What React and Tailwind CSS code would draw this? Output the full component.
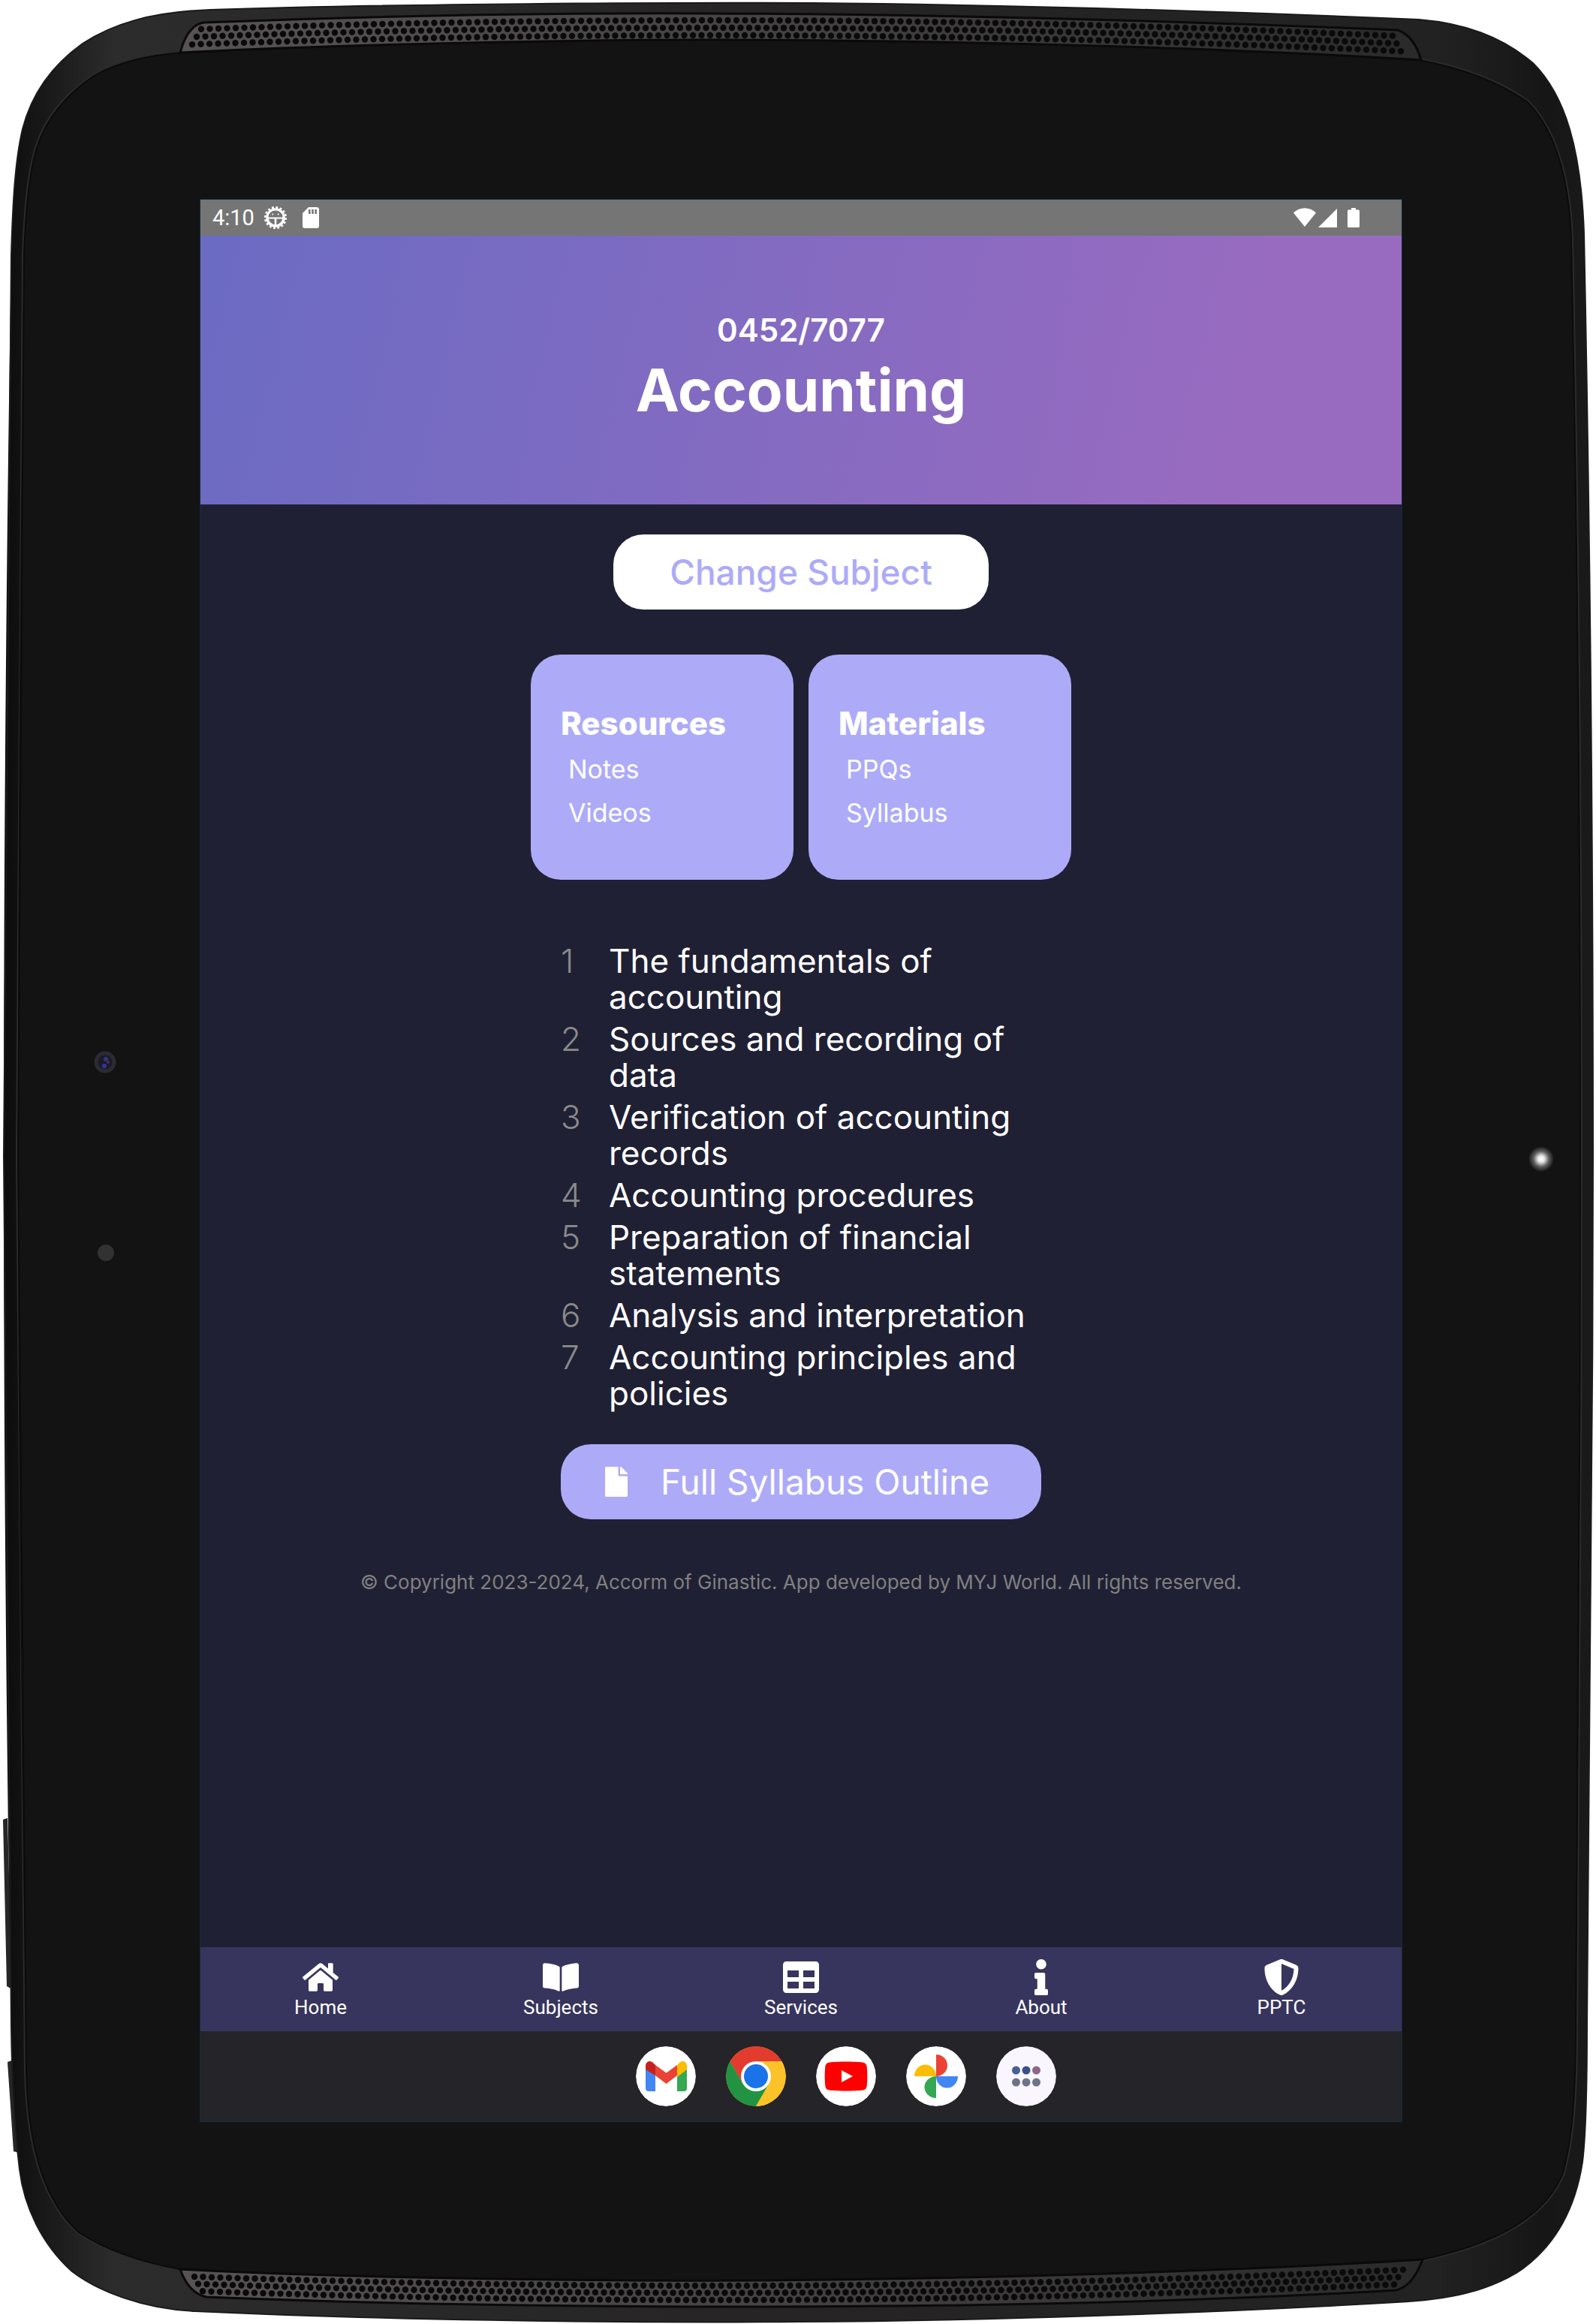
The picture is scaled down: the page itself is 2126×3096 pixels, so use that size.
import React from "react";
import { FaHome, FaBookOpen, FaTable, FaInfo, FaShieldAlt, FaFile } from "react-icons/fa";

const topics = [
  ["The fundamentals of", "accounting"],
  ["Sources and recording of", "data"],
  ["Verification of accounting", "records"],
  ["Accounting procedures"],
  ["Preparation of financial", "statements"],
  ["Analysis and interpretation"],
  ["Accounting principles and", "policies"],
];

const tabs = [
  { label: "Home", Icon: FaHome },
  { label: "Subjects", Icon: FaBookOpen },
  { label: "Services", Icon: FaTable },
  { label: "About", Icon: FaInfo },
  { label: "PPTC", Icon: FaShieldAlt },
];

const OUTER =
  "M15 340 C17 270 20 215 30 172 C42 125 68 88 110 58 C150 32 200 16 280 13 C520 5 900 3 1080 4 C1400 7 1700 18 1890 26 C1950 31 2000 48 2042 84 C2086 128 2106 200 2110 310 C2118 700 2122 1100 2122 1540 C2122 1950 2116 2400 2114 2700 C2114 2780 2113 2840 2108 2880 C2098 2945 2070 2995 2020 3028 C1980 3052 1930 3064 1860 3067 C1600 3082 1300 3092 1063 3093 C800 3095 500 3090 260 3079 C190 3076 130 3052 96 3026 C56 2990 32 2940 26 2890 C20 2840 16 2780 15 2700 C8 2300 5 1900 5 1540 C5 1100 9 700 15 340 Z";
const FACE =
  "M32 340 C34 280 38 235 48 200 C60 160 85 128 125 101 C160 81 200 73 245 70 C500 57 800 53 950 53 C1300 54 1640 64 1890 80 C1945 90 1995 108 2035 136 C2070 172 2090 230 2093 320 C2101 700 2105 1100 2105 1540 C2105 1950 2102 2400 2099 2720 C2098 2800 2094 2850 2082 2895 C2064 2940 2015 2985 1895 3010 C1640 3026 1300 3036 1000 3038 C750 3039 450 3034 240 3023 C195 3015 145 3000 105 2974 C62 2935 38 2870 35 2760 C28 2300 24 1900 24 1540 C24 1100 27 700 32 340 Z";

const grilleRows = [0, 1, 2];

function Grille({ bottom }) {
  const holes = [];
  grilleRows.forEach((row) => {
    const start = (bottom ? [259, 264, 270] : [268, 262, 256])[row];
    const end = (bottom ? [1876, 1870, 1862] : [1862, 1868, 1874])[row];
    for (let x = start; x < end; x += 11.5) {
      const bend = 0.0000253 * (x - 950) * (x - 950);
      const y = bottom ? 3045 + row * 9.5 - bend : 27 + row * 10 + bend;
      holes.push(<circle key={`${row}-${x}`} cx={x} cy={y} r="4.2" />);
    }
  });
  return (
    <g>
      <path
        d={
          bottom
            ? "M240 3023 C450 3034 750 3039 1000 3038 C1300 3036 1640 3026 1895 3010 C1886 3034 1876 3046 1860 3051 C1600 3066 1300 3073 1000 3073 C750 3073 500 3069 275 3060 C256 3056 246 3040 240 3023 Z"
            : "M240 70 C246 48 256 32 272 30 C500 21 750 17 950 18 C1300 19 1640 31 1862 40 C1878 46 1888 62 1893 80 C1640 64 1300 54 950 53 C800 53 500 57 240 70 Z"
        }
        fill="url(#mesh)"
        stroke="#0a0a0a"
        strokeWidth="3"
      />
      <g fill="#0a0a0a">{holes}</g>
    </g>
  );
}

function DeviceFrame() {
  return (
    <svg
      className="absolute inset-0 h-full w-full"
      viewBox="0 0 2126 3096"
      preserveAspectRatio="none"
      aria-hidden="true"
    >
      <defs>
        <linearGradient id="shell" x1="0" x2="1" y1="0" y2="0">
          <stop offset="0" stopColor="#0c0c0c" />
          <stop offset="0.02" stopColor="#161616" />
          <stop offset="0.07" stopColor="#2c2c2c" />
          <stop offset="0.5" stopColor="#262424" />
          <stop offset="0.9" stopColor="#222222" />
          <stop offset="0.97" stopColor="#161616" />
          <stop offset="1" stopColor="#1a1a1a" />
        </linearGradient>
        <linearGradient id="mesh" x1="0" x2="1" y1="0" y2="0">
          <stop offset="0" stopColor="#575354" />
          <stop offset="0.5" stopColor="#444142" />
          <stop offset="1" stopColor="#2a2a2a" />
        </linearGradient>
        <radialGradient id="led">
          <stop offset="0" stopColor="#ffffff" />
          <stop offset="0.25" stopColor="#e8e8e8" />
          <stop offset="0.6" stopColor="#606060" />
          <stop offset="1" stopColor="#131313" />
        </radialGradient>
      </defs>
      <path d="M4 2424 L10 2422 L16 2650 L9 2646 Z" fill="#262626" />
      <path d="M10 2747 L18 2744 L26 2868 L18 2866 Z" fill="#262626" />
      <path d={OUTER} fill="url(#shell)" stroke="#1b1b1b" strokeWidth="2" />
      <path d={FACE} fill="#131313" stroke="#2b2b2b" strokeWidth="6" />
      <path d={FACE} fill="#131313" stroke="#0b0b0b" strokeWidth="2" />
      <Grille />
      <Grille bottom />
      <circle cx="140" cy="1415" r="12" fill="#1a1b2a" stroke="#2b2c33" strokeWidth="5" />
      <circle cx="141" cy="1411" r="3" fill="#33377a" />
      <circle cx="139" cy="1420" r="3" fill="#33379a" />
      <circle cx="144" cy="1415" r="2" fill="#5a2c4a" />
      <circle cx="141" cy="1669" r="11" fill="#323232" />
      <circle cx="2053" cy="1544" r="17" fill="url(#led)" />
    </svg>
  );
}

function StatusBar() {
  return (
    <div className="flex h-12 items-center bg-[#757575] pl-4 pr-14 text-white">
      <span className="font-[Roboto,sans-serif] text-[29px] leading-8">4:10</span>
      <svg className="ml-3 size-8" viewBox="0 0 32 32" aria-hidden="true">
        <circle cx="16" cy="16" r="11" fill="none" stroke="#fff" strokeWidth="3.5" />
        <circle cx="16" cy="16" r="13.6" fill="none" stroke="#fff" strokeWidth="3" strokeDasharray="2.8 2.54" />
        <path d="M6 15.500h20v2H17.300V27h-2.600v-9.500H6z" fill="#fff" />
        <path d="M6.500 15a9.500 8.500 0 0 1 19 0z" fill="#757575" />
        <circle cx="12.300" cy="11.500" r="1" fill="#fff" />
        <circle cx="19.700" cy="11.500" r="1" fill="#fff" />
      </svg>
      <svg className="ml-5 h-7 w-[22px]" viewBox="0 0 22 28" aria-hidden="true">
        <path d="M8 0h11a3 3 0 0 1 3 3v22a3 3 0 0 1-3 3H3a3 3 0 0 1-3-3V8z" fill="#fff" />
        <path d="M8 3h2.500v6H8zM12.200 3h2.500v6h-2.500zM16.400 3h2.500v6h-2.500z" fill="#757575" />
      </svg>
      <svg className="ml-auto h-[26px] w-[88px]" viewBox="0 0 88 26" fill="#fff" aria-hidden="true">
        <path d="M0 6.500C8.500-1.800 21.500-1.800 30 6.500L15 25z" />
        <path d="M58 1v25H33z" />
        <path d="M77 0h6v2.500h3.500a1.500 1.500 0 0 1 1.500 1.500v20.500a1.500 1.500 0 0 1-1.500 1.500h-13a1.500 1.500 0 0 1-1.500-1.500V4a1.500 1.500 0 0 1 1.500-1.500H77z" />
      </svg>
    </div>
  );
}

function LinkCard({ title, links }) {
  return (
    <section className="w-[350px] rounded-[40px] bg-[#adabf8] px-10 py-[60px] text-white">
      <h2 className="text-[42px] font-extrabold leading-[64px]">{title}</h2>
      {links.map((link) => (
        <a key={link} href="#" className="block pl-2.5 text-[34px] leading-[58px]">
          {link}
        </a>
      ))}
    </section>
  );
}

const dockButton = "size-20 overflow-hidden rounded-full";

function Dock() {
  return (
    <div className="flex h-[120px] items-center justify-center gap-10 bg-[#252428] pl-[120px]">
      <button aria-label="Gmail" className={dockButton}>
        <svg viewBox="0 0 80 80">
          <circle cx="40" cy="40" r="40" fill="#fff" />
          <path d="M13 29l13 10v21H17a4 4 0 0 1-4-4z" fill="#4285f4" />
          <path d="M55 39l13-10v27a4 4 0 0 1-4 4h-9z" fill="#34a853" />
          <path d="M55 25l3.500-3.500c4-3.500 9.500-1 9.500 4.500v5L55 41z" fill="#fbbc04" />
          <path d="M26 25l14.500 10.500L55 25v14L40.500 50 26 39z" fill="#ea4335" />
          <path d="M13 31v-5c0-5.500 5.500-8 9.500-4.500L26 25v14z" fill="#c5221f" />
        </svg>
      </button>
      <button aria-label="Chrome" className={dockButton}>
        <svg viewBox="0 0 80 80">
          <circle cx="40" cy="40" r="40" fill="#fcc22a" />
          <path d="M5.400 20A40 40 0 0 1 74.600 20H40L22.700 50z" fill="#e33b2e" />
          <path d="M5.400 20A40 40 0 0 0 40 80L57.300 50H22.700z" fill="#229342" />
          <path d="M40 20h34.600A40 40 0 0 1 40 80l17.300-30z" fill="#fcc22a" />
          <circle cx="40" cy="40" r="20" fill="#fff" />
          <circle cx="40" cy="40" r="16" fill="#1a73e8" />
        </svg>
      </button>
      <button aria-label="YouTube" className={dockButton}>
        <svg viewBox="0 0 80 80">
          <circle cx="40" cy="40" r="40" fill="#fff" />
          <path d="M18 21.500c10-1.300 34-1.300 44 0 4 .5 5.500 3 5.800 6.500.7 7 .7 17 0 24-.3 3.500-1.800 6-5.800 6.500-10 1.300-34 1.300-44 0-4-.5-5.500-3-5.800-6.500-.7-7-.7-17 0-24 .3-3.500 1.800-6 5.800-6.500z" fill="#f00" />
          <path d="M34 32l15 8-15 8z" fill="#fff" />
        </svg>
      </button>
      <button aria-label="Photos" className={dockButton}>
        <svg viewBox="0 0 80 80">
          <circle cx="40" cy="40" r="40" fill="#fff" />
          <path d="M40 40V11a15 14.500 0 0 1 0 29z" fill="#ea4335" />
          <path d="M40 40H69a14.500 15.500 0 0 1-29 0z" fill="#4285f4" />
          <path d="M40 40V69a15.500 14.500 0 0 1 0-29z" fill="#34a853" />
          <path d="M40 40H11a14.500 15.500 0 0 1 29 0z" fill="#fbbc04" />
        </svg>
      </button>
      <button aria-label="All apps" className={dockButton}>
        <svg viewBox="0 0 80 80">
          <circle cx="40" cy="40" r="40" fill="#f9f7fd" />
          <circle cx="26.500" cy="32" r="5.500" fill="#4a5f95" />
          <circle cx="40" cy="32" r="5.500" fill="#3c5088" />
          <circle cx="53.500" cy="32" r="5.500" fill="#8c6788" />
          <circle cx="26.500" cy="48" r="5.500" fill="#6d7488" />
          <circle cx="40" cy="48" r="5.500" fill="#6d7488" />
          <circle cx="53.500" cy="48" r="5.500" fill="#6d7488" />
        </svg>
      </button>
    </div>
  );
}

export default function App() {
  return (
    <div className="relative flex min-h-screen flex-col bg-white pb-[269px] pl-[266px] pr-[258px] pt-[265px] font-[Inter,sans-serif]">
      <DeviceFrame />
      <div className="relative flex flex-1 flex-col border border-[#0e2f40] bg-[#202034]">
        <StatusBar />
        <header className="bg-[linear-gradient(103deg,#6b6bc3_0%,#996bc0_88%)] pb-[102px] pt-24 text-center text-white">
          <p className="text-[42px] font-semibold leading-[60px]">0452/7077</p>
          <h1 className="text-[78px] font-bold leading-[100px]">Accounting</h1>
        </header>
        <main className="flex flex-1 flex-col items-center pt-10">
          <button className="h-[100px] w-[500px] rounded-[40px] bg-white text-[46px] font-medium text-[#adabf8]">
            Change Subject
          </button>
          <div className="mt-[60px] flex gap-5">
            <LinkCard title="Resources" links={["Notes", "Videos"]} />
            <LinkCard title="Materials" links={["PPQs", "Syllabus"]} />
          </div>
          <ol className="mb-11 mt-[84px] flex w-[640px] flex-col gap-2 text-[44px] leading-12 text-white">
            {topics.map((lines, i) => (
              <li key={lines[0]} className="flex">
                <span className="w-16 shrink-0 font-light text-[#8a8a8a]">{i + 1}</span>
                <span className="whitespace-nowrap">
                  {lines.map((line, n) => (
                    <React.Fragment key={line}>
                      {n > 0 && <br />}
                      {line}
                    </React.Fragment>
                  ))}
                </span>
              </li>
            ))}
          </ol>
          <button className="flex h-[100px] w-[640px] items-center rounded-[40px] bg-[#adabf8] pl-[59px] text-[46px] text-white">
            <FaFile className="h-10 w-[30px]" />
            <span className="ml-11">Full Syllabus Outline</span>
          </button>
          <p className="mt-16 text-[26px] leading-10 text-[#808080]">
            © Copyright 2023-2024, Accorm of Ginastic. App developed by MYJ World. All rights reserved.
          </p>
        </main>
        <nav className="grid h-28 grid-cols-5 bg-[#37355d] font-[Roboto,sans-serif] text-white">
          {tabs.map(({ label, Icon }) => (
            <a key={label} href="#" className="flex flex-col items-center pt-4">
              <Icon className="h-12 w-12" />
              <span className="text-[26px] leading-8">{label}</span>
            </a>
          ))}
        </nav>
        <Dock />
      </div>
    </div>
  );
}
